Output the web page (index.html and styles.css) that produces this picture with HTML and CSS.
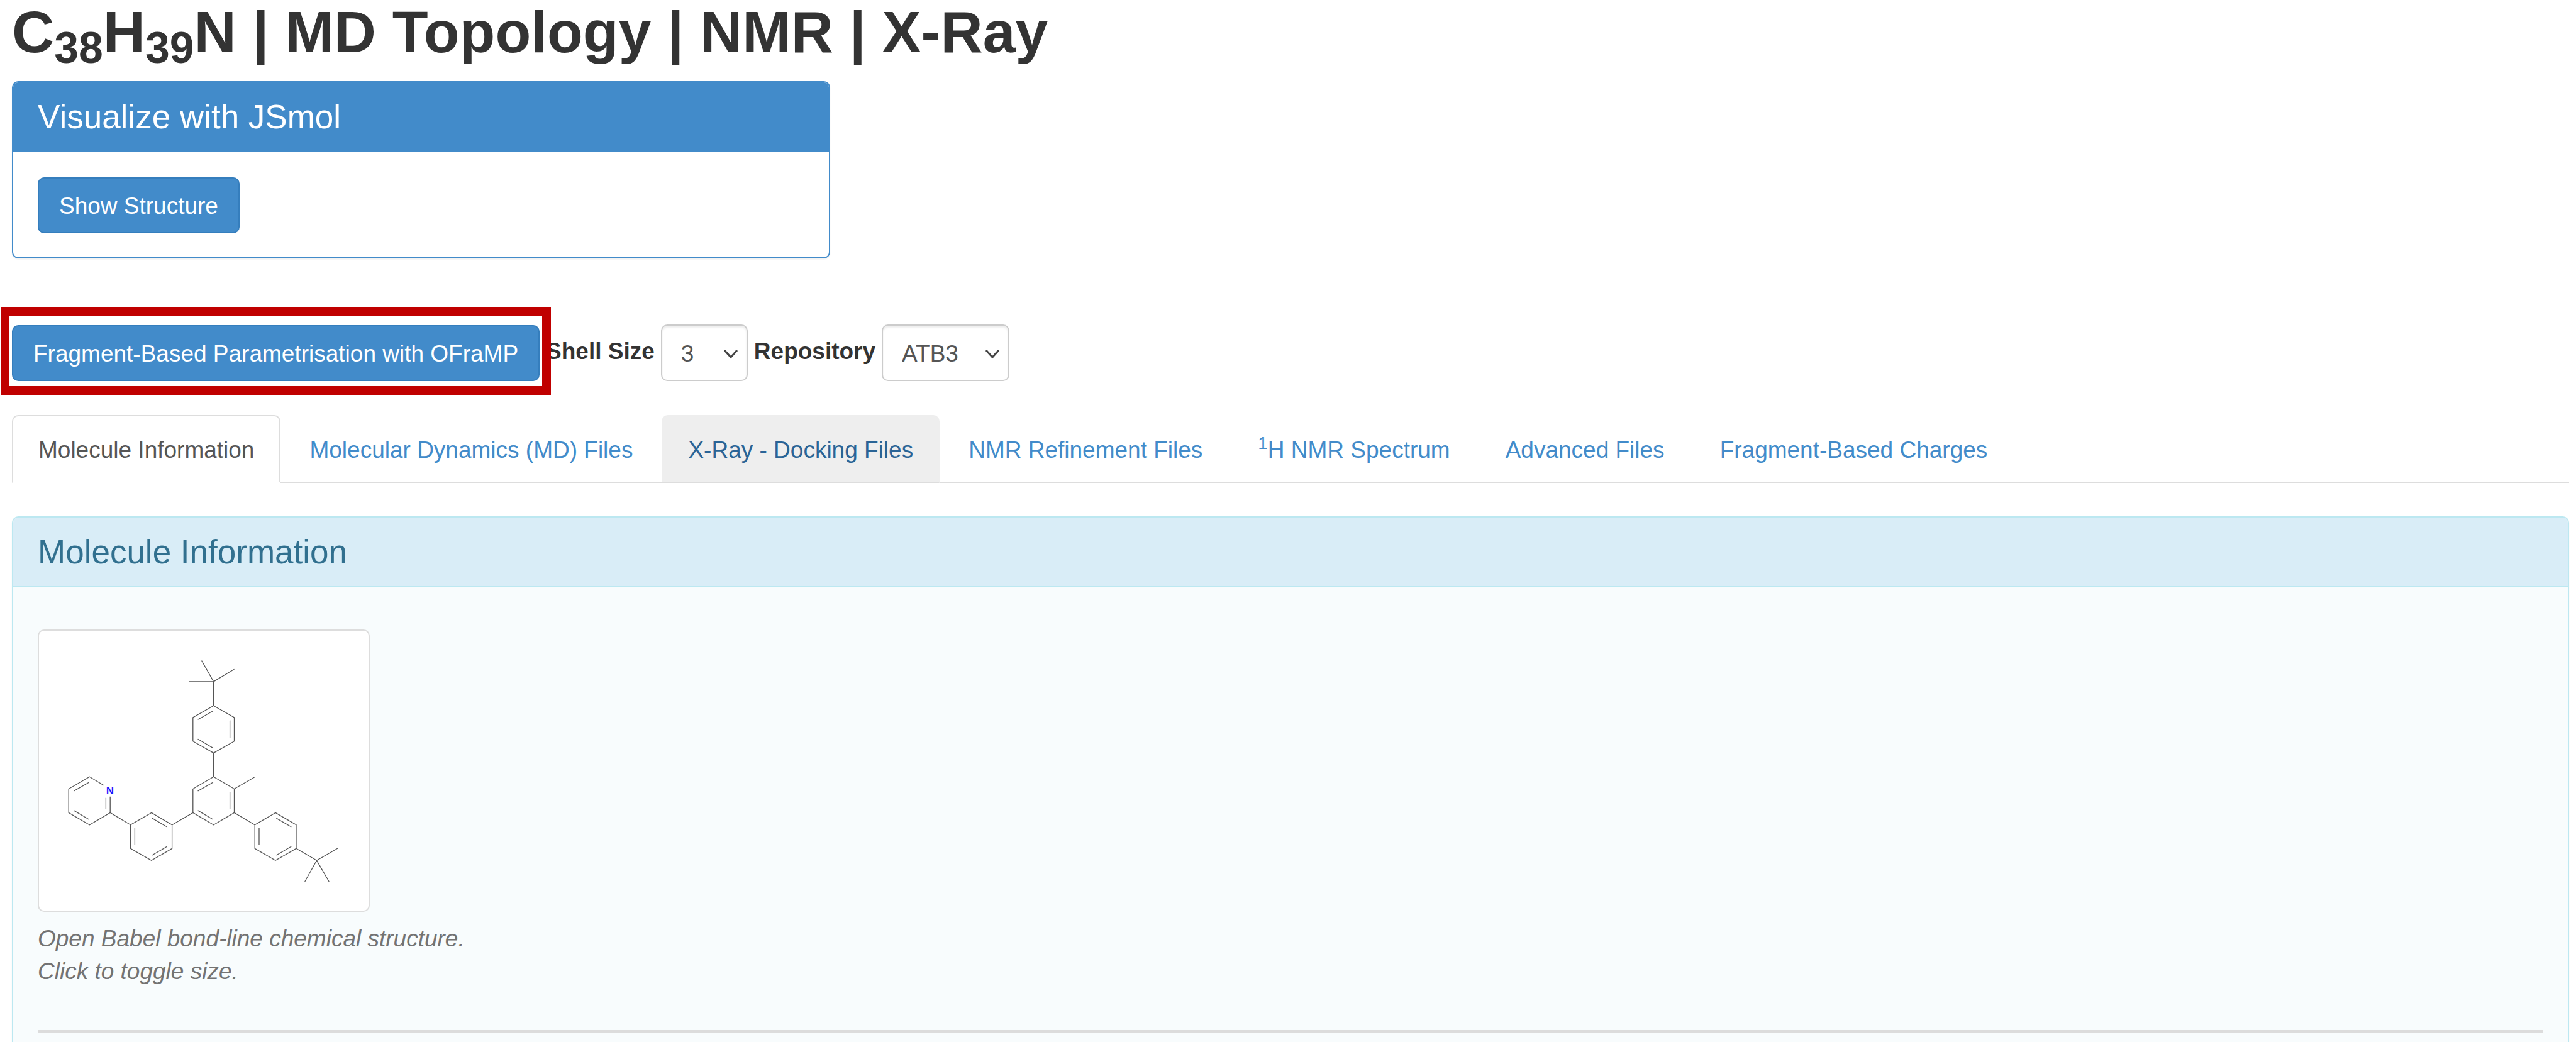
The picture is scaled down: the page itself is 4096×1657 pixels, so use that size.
FILE: index.html
```html
<!DOCTYPE html>
<html lang="en">
<head>
<meta charset="utf-8">
<title>C38H39N | MD Topology | NMR | X-Ray</title>
<link rel="stylesheet" href="styles.css">
</head>
<body>
<h1 class="page-title">C<sub>38</sub>H<sub>39</sub>N | MD Topology | NMR | X-Ray</h1>

<section class="panel panel-primary">
  <header class="panel-heading"><h2 class="panel-title">Visualize with JSmol</h2></header>
  <div class="panel-body"><button type="button" class="btn">Show Structure</button></div>
</section>

<form class="toolbar">
  <span class="highlight"><button type="button" class="btn">Fragment-Based Parametrisation with OFraMP</button></span>
  <label class="field-label" for="shell">Shell Size</label>
  <span class="select select-short">
    <select id="shell"><option>3</option></select>
    <svg class="chevron" viewBox="0 0 24 16" aria-hidden="true"><path d="M2 2L12 13L22 2"/></svg>
  </span>
  <label class="field-label" for="repo">Repository</label>
  <span class="select select-long">
    <select id="repo"><option>ATB3</option></select>
    <svg class="chevron" viewBox="0 0 24 16" aria-hidden="true"><path d="M2 2L12 13L22 2"/></svg>
  </span>
</form>

<nav class="tabs">
  <a class="tab tab-active" href="#info">Molecule Information</a>
  <a class="tab" href="#md">Molecular Dynamics (MD) Files</a>
  <a class="tab tab-hover" href="#xray">X-Ray - Docking Files</a>
  <a class="tab" href="#nmr">NMR Refinement Files</a>
  <a class="tab" href="#spectrum"><sup>1</sup>H NMR Spectrum</a>
  <a class="tab" href="#advanced">Advanced Files</a>
  <a class="tab" href="#charges">Fragment-Based Charges</a>
</nav>

<section class="panel panel-info" id="info">
  <header class="panel-heading"><h2 class="panel-title">Molecule Information</h2></header>
  <div class="panel-body">
    <figure class="structure">
      <svg class="molecule" viewBox="0 0 524 445" role="img" aria-label="Bond-line structure">
        <g class="bonds" transform="translate(-2 -1)">
          <path d="M279.6 81.9L260.6 48.5M279.6 81.9L312.5 62.3M279.6 81.9H241M279.6 81.9V120.2"/>
          <path d="M279.6 120.2L312.5 139V176.7L279.6 195.4L246.8 176.7V139ZM279.6 195.4V233.3"/>
          <path d="M254.6 142.3L278.9 128.5M254.6 173.2L278.9 187.6M305.6 143.6V171.6"/>
          <path d="M279.6 233.3L312.5 252.5V290.4L279.6 309.7L246.8 290.4V252.5ZM312.5 252.5L345.7 233.3"/>
          <path d="M254.6 255.9L278.9 242M254.6 286.9L278.9 301.2M305.6 257V285"/>
          <path d="M246.8 290.4L213.6 309.7M180.8 290.4L213.6 309.7V347.3L180.8 366.3L147.6 347.3V309.7Z"/>
          <path d="M181.9 299.1L205.8 313M154.4 314.5V341.9M205.8 344L181.9 358"/>
          <path d="M147.6 309.7L115.2 290.4V264.8M115.2 290.4L82.4 309.7L49.2 290.4V252.5L82.4 233.3L104.8 246.8"/>
          <path d="M57.4 255.9L81.7 242M57.4 286.9L81.7 301.2M108.4 266.7V285"/>
          <path d="M312.5 290.4L345.2 309.7M378 290.4L411 309.7V347.3L378 366.3L345.2 347.3V309.7Z"/>
          <path d="M379.4 299.1L403.3 313M352 314.5V341.9M403.3 344L379.4 358"/>
          <path d="M411 347.3L443.6 366.3L477 347M443.6 366.3L424.7 400M443.6 366.3L463.2 400"/>
        </g>
        <text class="atom" x="113" y="260">N</text>
      </svg>
      <figcaption class="caption">Open Babel bond-line chemical structure.<br>Click to toggle size.</figcaption>
    </figure>
    <hr class="rule">
  </div>
</section>
</body>
</html>
```

FILE: styles.css
```css
* { box-sizing: border-box; }

body {
  display: flex;
  flex-direction: column;
  min-height: 100vh;
  margin: 0;
  padding: 0 11px 0 19px;
  background: #fff;
  color: #333;
  font: 37px/52px "Liberation Sans", Arial, sans-serif;
}

.page-title {
  margin: 0 0 26px;
  font-size: 93px;
  font-weight: 700;
  line-height: 103px;
}

sub, sup {
  position: relative;
  font-size: 75%;
  line-height: 0;
  vertical-align: baseline;
}
sub { bottom: -0.25em; }
sup { top: -0.5em; }

.panel {
  border: 2px solid;
  border-radius: 10px;
  box-shadow: 0 2px 2px rgba(0, 0, 0, 0.05);
}
.panel-heading {
  padding: 26px 39px;
  border-bottom: 2px solid;
  border-radius: 8px 8px 0 0;
}
.panel-title {
  margin: 0;
  font-size: 53px;
  font-weight: 400;
  line-height: 57px;
}
.panel-body { padding: 40px 39px 38px; }

.panel-primary { width: 32%; border-color: #428bca; }
.panel-primary .panel-heading {
  border-color: #428bca;
  background: #428bca;
  color: #fff;
}

.panel-info {
  flex: 1;
  margin-top: 53px;
  border-color: #bce8f1;
  border-bottom: 0;
  border-radius: 10px 10px 0 0;
  background: #f8fcfd;
}
.panel-info .panel-heading {
  border-color: #bce8f1;
  background: #d9edf7;
  color: #31708f;
}
.panel-info .panel-body { padding-bottom: 14px; }

.btn {
  display: block;
  height: 89px;
  padding: 3px 32px 0;
  border: 2px solid #357ebd;
  border-radius: 10px;
  background: #428bca;
  color: #fff;
  font: inherit;
  white-space: nowrap;
}

.toolbar {
  display: flex;
  align-items: flex-end;
  gap: 10px;
  margin: 105px 0 54px;
}
.highlight { position: relative; }
.highlight::after {
  content: "";
  position: absolute;
  inset: -29px -18px -22px -18px;
  border: 14px solid #c00000;
  pointer-events: none;
}
.field-label { padding-bottom: 21px; font-weight: 700; }

.select { position: relative; }
.select-short { width: 138px; }
.select-long { width: 203px; }
.select select {
  display: block;
  width: 100%;
  height: 90px;
  padding: 4px 30px 0;
  border: 2px solid #ccc;
  border-radius: 10px;
  appearance: none;
  background: #fff;
  box-shadow: inset 0 3px 3px rgba(0, 0, 0, 0.075);
  color: #555;
  font: inherit;
}
.chevron {
  position: absolute;
  top: 39px;
  right: 15px;
  width: 24px;
  height: 16px;
  fill: none;
  stroke: #444;
  stroke-width: 3;
  pointer-events: none;
}

.tabs {
  display: flex;
  gap: 4px;
  border-bottom: 2px solid #ddd;
}
.tab {
  margin-bottom: -2px;
  padding: 28px 40px 24px;
  border: 2px solid transparent;
  border-radius: 10px 10px 0 0;
  color: #428bca;
  text-decoration: none;
  white-space: nowrap;
}
.tab-active {
  border-color: #ddd #ddd #fff;
  background: #fff;
  color: #555;
}
.tab-hover {
  border-color: #eee #eee #ddd;
  background: #eee;
  color: #2a6496;
}

.structure { margin: 27px 0 0; }
.molecule {
  display: block;
  width: 528px;
  height: 449px;
  border: 2px solid #ddd;
  border-radius: 10px;
  background: #fff;
}
.bonds {
  fill: none;
  stroke: #555;
  stroke-width: 1.3;
}
.atom {
  fill: #1a1aff;
  font-size: 17px;
  font-weight: 700;
  text-anchor: middle;
}
.caption {
  margin-top: 17px;
  color: #737373;
  font-style: italic;
}
.rule {
  height: 5px;
  margin: 67px 0 0;
  border: 0;
  background: #dcdcdc;
}
```
